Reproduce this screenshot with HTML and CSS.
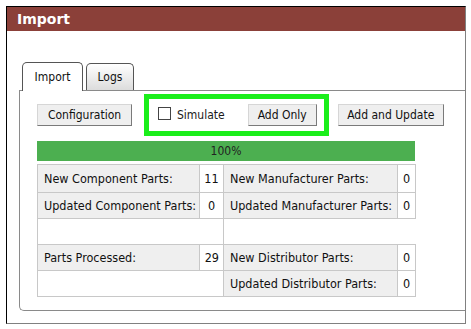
FILE: index.html
```html
<!DOCTYPE html>
<html>
<head>
<meta charset="utf-8">
<link rel="stylesheet" href="styles.css">
</head>
<body>
<div class="dialog">
  <div class="titlebar">Import</div>
  <div class="dialog-body">
    <div class="tabs">
      <div class="tab tab-active">Import</div>
      <div class="tab tab-logs">Logs</div>
    </div>
    <div class="panel">
      <div class="actions">
        <button class="btn btn-config">Configuration</button>
        <div class="highlight">
          <label class="check"><span class="checkbox"></span><span>Simulate</span></label>
          <button class="btn btn-addonly">Add Only</button>
        </div>
        <button class="btn btn-update">Add and Update</button>
      </div>
      <div class="progress"><div class="progress-bar" style="width:100%">100%</div></div>
      <table class="stats">
        <colgroup>
          <col class="c-label1"><col class="c-val1"><col class="c-label2"><col class="c-val2">
        </colgroup>
        <tr class="r1">
          <td class="label">New Component Parts:</td><td class="value">11</td>
          <td class="label">New Manufacturer Parts:</td><td class="value">0</td>
        </tr>
        <tr>
          <td class="label">Updated Component Parts:</td><td class="value">0</td>
          <td class="label">Updated Manufacturer Parts:</td><td class="value">0</td>
        </tr>
        <tr>
          <td class="empty" colspan="2"></td>
          <td class="blank" colspan="2"></td>
        </tr>
        <tr>
          <td class="label">Parts Processed:</td><td class="value value-right">29</td>
          <td class="label">New Distributor Parts:</td><td class="value">0</td>
        </tr>
        <tr>
          <td class="empty" colspan="2"></td>
          <td class="label">Updated Distributor Parts:</td><td class="value">0</td>
        </tr>
      </table>
    </div>
  </div>
</div>
</body>
</html>
```
FILE: styles.css
```css
html, body {
  margin: 0;
  padding: 0;
  background: #fff;
}
body {
  font-family: "DejaVu Sans Condensed", "DejaVu Sans", sans-serif;
  font-size: 12px;
  color: #1a1a1a;
}
.dialog {
  margin: 6px 0 0 6px;
  width: 458px;
  height: 316px;
  border-top: 1px solid #000;
  border-left: 1px solid #000;
  border-right: 1px solid #808080;
  border-bottom: 1px solid #808080;
}
.titlebar {
  height: 24px;
  line-height: 24px;
  background: #8b4039;
  color: #fff;
  font-family: "DejaVu Sans", sans-serif;
  font-weight: bold;
  font-size: 14px;
  padding-left: 10px;
}
.dialog-body {
  padding: 31px 0 0 12px;
}
.tabs {
  display: flex;
  align-items: flex-end;
  gap: 3px;
  height: 28px;
  margin-left: 3px;
}
.tab {
  box-sizing: border-box;
  border: 1px solid #555;
  border-bottom: none;
  border-radius: 5px 5px 0 0;
  text-align: center;
  background: linear-gradient(#ffffff, #dcdcdc);
  color: #111;
}
.tab-active {
  width: 61px;
  height: 29px;
  line-height: 28px;
  margin-bottom: -1px;
  background: #fff;
  position: relative;
  z-index: 1;
}
.tab-logs {
  width: 48px;
  height: 27px;
  line-height: 27px;
}
.panel {
  border: 1px solid #8a8a8a;
  border-right: none;
  border-radius: 0 0 0 5px;
  padding: 3px 0 13px 17px;
}
.actions {
  display: flex;
  align-items: center;
}
.btn {
  box-sizing: border-box;
  height: 22px;
  padding: 0;
  font: inherit;
  color: #111;
  background: #efefef;
  border: 1px solid;
  border-color: #d6d6d6 #7a7a7a #7a7a7a #d6d6d6;
  border-radius: 0;
}
.btn-config { width: 95px; }
.btn-addonly { width: 69px; }
.btn-update { width: 106px; margin-left: 9px; }
.highlight {
  display: flex;
  align-items: center;
  margin-left: 12px;
  border: 5px solid #1aee1a;
  padding: 5px 7px 5px 9px;
}
.check {
  display: flex;
  align-items: center;
  margin-right: 23px;
}
.checkbox {
  box-sizing: border-box;
  width: 13px;
  height: 13px;
  border: 1px solid #444;
  background: #fff;
  margin-right: 6px;
  margin-top: -3px;
}
.progress {
  margin-top: 5px;
  width: 378px;
  height: 20px;
}
.progress-bar {
  height: 20px;
  line-height: 20px;
  background: #4caf50;
  text-align: center;
  color: #222;
}
.stats {
  margin-top: 3px;
  width: 378px;
  border-collapse: collapse;
  table-layout: fixed;
  font-size: 12.5px;
  color: #111;
}
.c-label1 { width: 162px; }
.c-val1 { width: 24px; }
.c-label2 { width: 174px; }
.c-val2 { width: 18px; }
.stats td {
  border: 1px solid #c8c8c8;
  height: 25px;
  padding: 0 5px;
  white-space: nowrap;
  overflow: hidden;
}
.stats .r1 td { height: 27px; }
.stats td.label {
  background: #efefef;
  padding-left: 6px;
}
.stats td.value {
  background: #fff;
  text-align: center;
  padding: 0;
}
.stats td.value-right {
  text-align: right;
  padding-right: 4px;
}
.stats td.blank {
  border-right-style: hidden;
}
```
